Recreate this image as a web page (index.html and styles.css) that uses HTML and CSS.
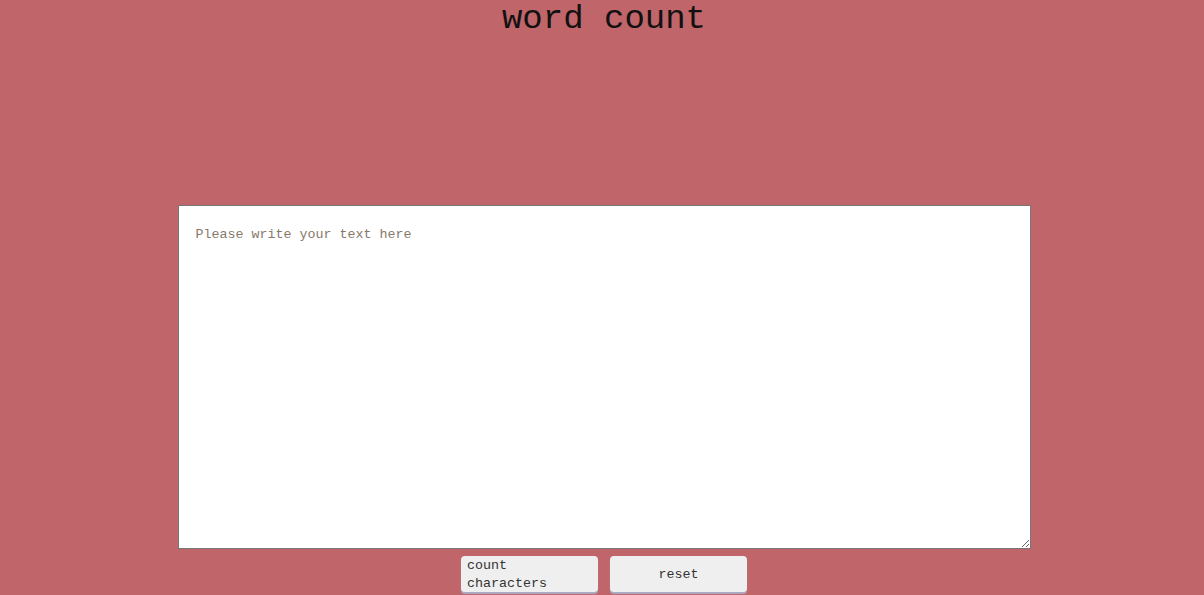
FILE: index.html
```html
<!DOCTYPE html>
<html>
<head>
<meta charset="utf-8">
<title>word count</title>
<link rel="stylesheet" href="styles.css">
</head>
<body>
<main class="page">
  <h1 class="title">word count</h1>
  <textarea class="editor" placeholder="Please write your text here"></textarea>
  <div class="actions">
    <button class="btn btn-left">count characters</button>
    <button class="btn">reset</button>
  </div>
</main>
</body>
</html>
```
FILE: styles.css
```css
html, body {
  margin: 0;
  padding: 0;
  background: #c06569;
  height: 100%;
}
.page {
  display: flex;
  flex-direction: column;
  align-items: center;
  padding-left: 4px;
  font-family: "Liberation Mono", monospace;
}
.title {
  margin: 0;
  font-family: "Liberation Mono", monospace;
  font-weight: normal;
  font-size: 34px;
  line-height: 38px;
  color: #111;
}
.editor {
  margin-top: 167px;
  box-sizing: border-box;
  width: 853px;
  height: 344px;
  border: 1px solid #767676;
  padding: 20px 17px;
  font-family: "Liberation Mono", monospace;
  font-size: 13.33px;
  line-height: 18px;
  background: #fff;
  color: #222;
  outline: none;
  resize: both;
  display: block;
}
.editor::placeholder {
  color: #86796a;
}
.actions {
  display: flex;
  gap: 12px;
  margin-top: 7px;
}
.btn {
  box-sizing: border-box;
  width: 137px;
  height: 36px;
  padding: 1px 6px 0;
  border: none;
  border-radius: 4px;
  background: #efefef;
  box-shadow: 0 2px 1px #a9abc4;
  font-family: "Liberation Mono", monospace;
  font-size: 13.33px;
  line-height: 18px;
  color: #333;
  cursor: pointer;
}
.btn-left {
  text-align: left;
}
```
